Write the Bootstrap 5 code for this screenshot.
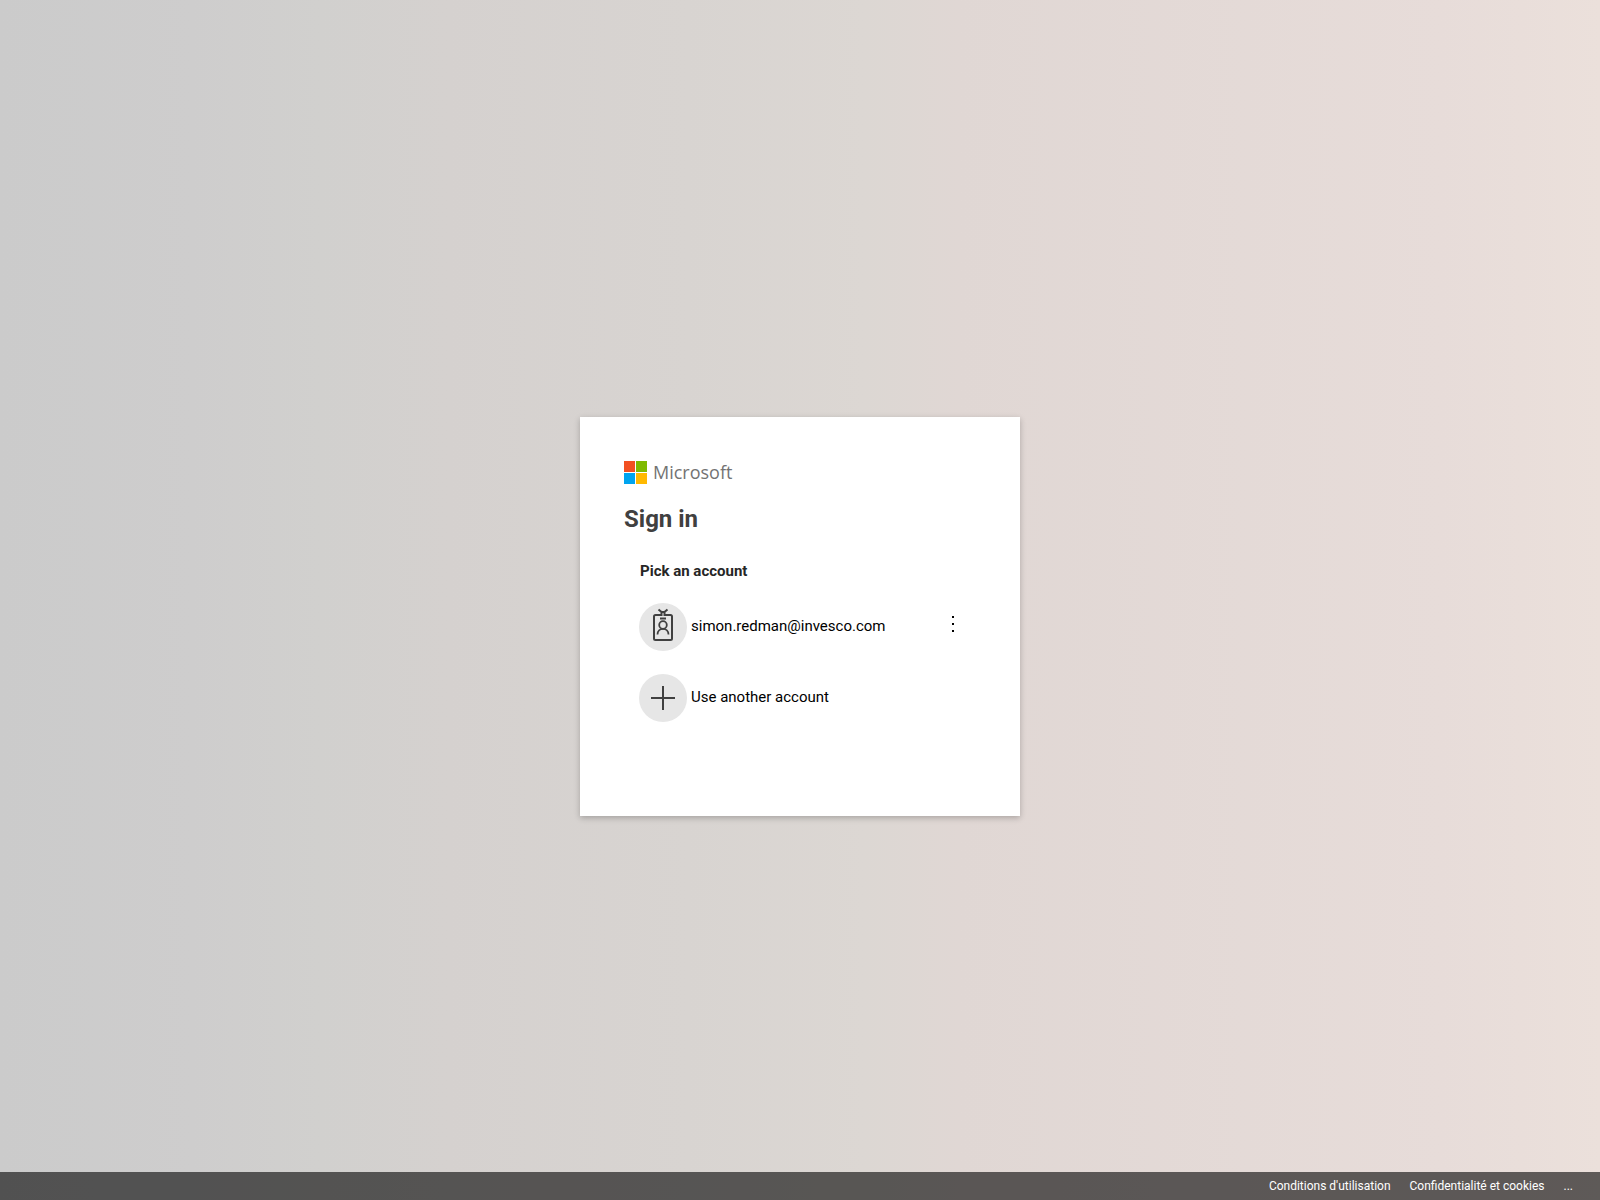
<!DOCTYPE html>
<html lang="en">
<head>
<meta charset="utf-8">
<meta name="viewport" content="width=device-width, initial-scale=1">
<title>Sign in</title>
<link href="https://cdn.jsdelivr.net/npm/bootstrap@5.3.0/dist/css/bootstrap.min.css" rel="stylesheet">
<style>
body { font-family: Roboto, sans-serif; font-size: 15px; line-height: 20px; color: #000;
  background: linear-gradient(90deg, #cbcbcb 0%, #cecdcd 12%, #d1d0ce 20%, #d5d1cf 28%, #d8d4d1 43%, #dcd7d3 54%, #e0d7d4 60%, #e7dcd9 90%, #ebe0db 100%); }
.stage { padding-top: 61px; }
.signin-box { width: 440px; max-width: 100%; min-height: 399px; padding: 44px; background: #fff; box-shadow: 0 2px 6px rgba(0,0,0,.24); }
.brand { height: 23px; gap: 6px; }
.brand-name { font: 500 18px/23px "Open Sans", sans-serif; color: #737373; }
h1 { font-size: 24px; line-height: 28px; font-weight: 700; color: #404040; margin: 21px 0 0; }
.picker { padding: 28px 15px 0; }
h2 { font-size: 15px; line-height: 20px; font-weight: 700; color: #262626; margin: 0 0 22px 1px; }
.account { gap: 4px; color: #000; }
.account-name { padding-bottom: 2px; }
.avatar { width: 48px; height: 48px; border-radius: 50%; background: #e6e6e6; flex: none; }
.accounts { gap: 23px; }
.more { width: 16px; height: 32px; margin-bottom: 6px; }
.page-foot { height: 28px; padding-right: 27px; gap: 19px; background: rgba(0,0,0,.6); font-size: 12px; line-height: 28px; }
.page-foot a { color: #fff; }
</style>
<script src="https://cdn.jsdelivr.net/npm/bootstrap@5.3.0/dist/js/bootstrap.bundle.min.js"></script>
</head>
<body class="d-flex flex-column min-vh-100">
<main class="stage flex-grow-1 d-flex align-items-center justify-content-center">
  <section class="signin-box">
    <div class="brand d-flex align-items-center">
      <svg width="23" height="23" viewBox="0 0 23 23" aria-hidden="true"><path fill="#f25022" d="M0 0h11v11H0z"/><path fill="#7fba00" d="M12 0h11v11H12z"/><path fill="#00a4ef" d="M0 12h11v11H0z"/><path fill="#ffb900" d="M12 12h11v11H12z"/></svg>
      <span class="brand-name">Microsoft</span>
    </div>
    <h1>Sign in</h1>
    <div class="picker">
      <h2>Pick an account</h2>
      <ul class="accounts list-unstyled d-flex flex-column mb-0">
        <li class="d-flex align-items-center justify-content-between">
          <a href="#" class="account d-flex align-items-center text-decoration-none">
            <span class="avatar"><svg class="d-block" width="48" height="48" viewBox="0 0 48 48" fill="none" stroke="#404040" stroke-width="2" aria-hidden="true"><path d="M22 12h-5.500q-1.500 0-1.500 1.500v22q0 1.500 1.500 1.500h15q1.500 0 1.500-1.500v-22q0-1.500-1.500-1.500H26M21 15.500h6M19.500 6.500l3 2.500v4M28.500 6.500l-3 2.500v4M22 9h4"/><circle cx="24" cy="22" r="3.800" stroke-width="1.800"/><path stroke-width="1.800" d="M18.500 31.500c0-3.500 2.500-5.700 5.500-5.700s5.500 2.200 5.500 5.700"/></svg></span>
            <span class="account-name">simon.redman@invesco.com</span>
          </a>
          <button type="button" class="more btn p-0 border-0 d-flex align-items-center justify-content-center" aria-label="Open menu">
            <svg width="2" height="16" viewBox="0 0 2 16" fill="#000" aria-hidden="true"><path d="M0 0h2v2H0zM0 7h2v2H0zM0 14h2v2H0z"/></svg>
          </button>
        </li>
        <li>
          <a href="#" class="account d-flex align-items-center text-decoration-none">
            <span class="avatar"><svg class="d-block" width="48" height="48" viewBox="0 0 48 48" stroke="#404040" stroke-width="2" aria-hidden="true"><path d="M24 12v24M12 24h24"/></svg></span>
            <span class="account-name">Use another account</span>
          </a>
        </li>
      </ul>
    </div>
  </section>
</main>
<footer class="page-foot d-flex justify-content-end">
  <a href="#" class="text-decoration-none">Conditions d'utilisation</a>
  <a href="#" class="text-decoration-none">Confidentialité et cookies</a>
  <a href="#" class="text-decoration-none" aria-label="More options">...</a>
</footer>
</body>
</html>
